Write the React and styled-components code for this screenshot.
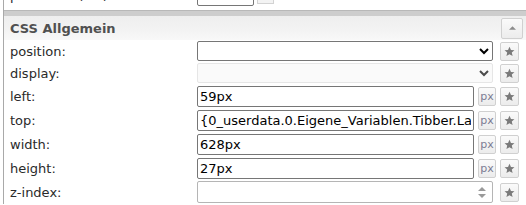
import styled, { createGlobalStyle } from "styled-components";

const GlobalStyle = createGlobalStyle`
  html, body {
    margin: 0;
    padding: 0;
    background: #fff;
    overflow: hidden;
  }
  body {
    font-family: "DejaVu Sans", Verdana, sans-serif;
    font-size: 13px;
    color: #222;
  }
`;

const Panel = styled.div`
  margin-top: -17px;
  margin-left: 3px;
  border-left: 1px solid #a9a9a9;
  width: 522px;
`;

const Row = styled.div`
  display: flex;
  align-items: center;
  height: ${(p) => (p.$short ? 22 : 24)}px;
`;

const Label = styled.div`
  width: 187px;
  padding-left: 6px;
  flex-shrink: 0;
  white-space: nowrap;
  color: #2a2a2a;
  line-height: 1;
`;

const Controls = styled.div`
  display: grid;
  grid-template-columns: 277px 18px 19px;
  column-gap: 4px;
  align-items: center;
`;

const TextInput = styled.input`
  box-sizing: border-box;
  width: 277px;
  height: 21px;
  margin: 0;
  padding: 0 2px;
  border: 1px solid #767676;
  border-radius: 2px;
  font-family: "DejaVu Sans", Verdana, sans-serif;
  font-size: 13px;
  color: #000;
  background: #fff;
  outline: none;
`;

const Select = styled.select`
  grid-column: 1 / span 2;
  box-sizing: border-box;
  width: 296px;
  height: 20px;
  margin: 0;
  padding: 0 2px;
  border: 1px solid ${(p) => (p.disabled ? "#dcdcdc" : "#767676")};
  border-radius: 2px;
  background: ${(p) => (p.disabled ? "#f8f8f8" : "#fff")};
  font-family: "DejaVu Sans", Verdana, sans-serif;
  font-size: 13px;
  color: #000;
`;

const SpinBox = styled.div`
  grid-column: 1 / span 2;
  box-sizing: border-box;
  width: 296px;
  height: 22px;
  display: flex;
  border: 1px solid #b5b5b5;
  border-radius: 2px;
  background: #fff;
`;

const SpinField = styled.input`
  flex: 1;
  min-width: 0;
  border: none;
  margin: 0;
  padding: 0 2px;
  outline: none;
  font-family: "DejaVu Sans", Verdana, sans-serif;
  font-size: 13px;
  background: transparent;
`;

const SpinArrows = styled.div`
  width: 15px;
  display: flex;
  flex-direction: column;
  align-items: center;
  justify-content: space-around;
  padding: 3px 0;
  margin-right: 3px;
`;

const SmallButton = styled.div`
  box-sizing: border-box;
  width: ${(p) => p.$w || 18}px;
  height: ${(p) => p.$h || 19}px;
  border: 1px solid #d0d0d0;
  border-radius: 2px;
  background: linear-gradient(#fafafa, #ececec);
  display: flex;
  align-items: center;
  justify-content: center;
  font-size: 11px;
  color: #7c7c94;
  line-height: 1;
  grid-column: ${(p) => p.$col || "auto"};
`;

const Separator = styled.div`
  margin-top: 3px;
  height: 5px;
  border-top: 1px solid #b8b8b8;
  background: #cdcdcd;
`;

const Header = styled.div`
  display: flex;
  align-items: center;
  justify-content: space-between;
  height: 24px;
  padding: 0 3px 0 6px;
  background: linear-gradient(#eeeeee, #f3f3f3 60%, #f8f8f8);
  font-weight: bold;
  font-size: 13px;
  color: #505050;
`;

const TopInput = styled.div`
  box-sizing: border-box;
  width: 57px;
  height: 21px;
  border: 1px solid #767676;
  border-radius: 2px;
`;

const TopButton = styled.div`
  box-sizing: border-box;
  width: 17px;
  height: 19px;
  margin-left: 3px;
  margin-bottom: 2px;
  border: 1px solid #d3d3d3;
  background: #f3f3f3;
`;

const Star = () => (
  <svg width="11" height="11" viewBox="0 0 24 24">
    <polygon
      points="12,1.5 15.2,8.6 22.8,9.3 17,14.4 18.7,22 12,18 5.3,22 7,14.4 1.2,9.3 8.8,8.6"
      fill="#7a7a7a"
    />
  </svg>
);

const Triangle = ({ down, size = 7, color = "#8c8c8c" }) => (
  <svg width={size} height={Math.ceil(size / 2)} viewBox="0 0 8 4">
    <polygon points={down ? "0,0 8,0 4,4" : "0,4 8,4 4,0"} fill={color} />
  </svg>
);

const StarButton = () => (
  <SmallButton $col="3" $w={19} $h={19}>
    <Star />
  </SmallButton>
);

const PxRow = ({ label, value }) => (
  <Row>
    <Label>{label}</Label>
    <Controls>
      <TextInput defaultValue={value} />
      <SmallButton>px</SmallButton>
      <StarButton />
    </Controls>
  </Row>
);

const App = () => {
  return (
    <>
      <GlobalStyle />
      <Panel>
        <Row>
          <Label>pausieren (ms):</Label>
          <TopInput />
          <TopButton />
        </Row>
        <Separator />
        <Header>
          <span>CSS Allgemein</span>
          <SmallButton $w={22} $h={21}>
            <Triangle />
          </SmallButton>
        </Header>
        <Row $short>
          <Label>position:</Label>
          <Controls>
            <Select defaultValue="">
              <option value=""></option>
              <option value="relative">relative</option>
              <option value="absolute">absolute</option>
            </Select>
            <StarButton />
          </Controls>
        </Row>
        <Row $short>
          <Label>display:</Label>
          <Controls>
            <Select disabled defaultValue="">
              <option value=""></option>
            </Select>
            <StarButton />
          </Controls>
        </Row>
        <PxRow label="left:" value="59px" />
        <PxRow
          label="top:"
          value="{0_userdata.0.Eigene_Variablen.Tibber.Last}"
        />
        <PxRow label="width:" value="628px" />
        <PxRow label="height:" value="27px" />
        <Row>
          <Label>z-index:</Label>
          <Controls>
            <SpinBox>
              <SpinField />
              <SpinArrows>
                <Triangle size={8} color="#9a9a9a" />
                <Triangle down size={8} color="#9a9a9a" />
              </SpinArrows>
            </SpinBox>
            <StarButton />
          </Controls>
        </Row>
      </Panel>
    </>
  );
};

export default App;
